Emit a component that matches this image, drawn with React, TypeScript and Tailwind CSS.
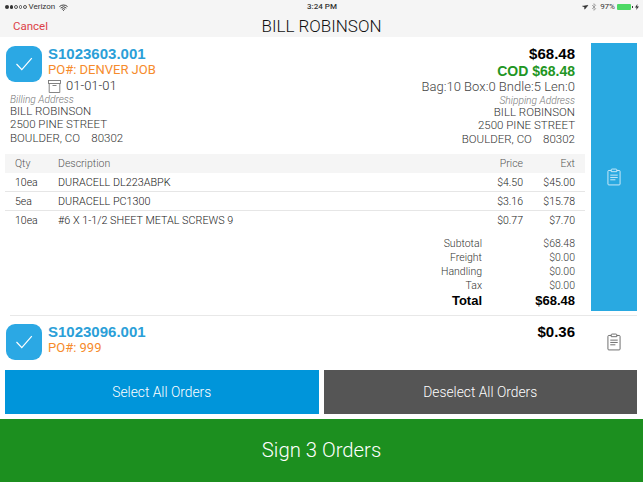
import { Bluetooth, Navigation, Wifi } from "lucide-react";

const items = [
  { qty: "10ea", desc: "DURACELL DL223ABPK", price: "$4.50", ext: "$45.00" },
  { qty: "5ea", desc: "DURACELL PC1300", price: "$3.16", ext: "$15.78" },
  { qty: "10ea", desc: "#6 X 1-1/2 SHEET METAL SCREWS 9", price: "$0.77", ext: "$7.70" },
];

const totals = [
  { label: "Subtotal", value: "$68.48" },
  { label: "Freight", value: "$0.00" },
  { label: "Handling", value: "$0.00" },
  { label: "Tax", value: "$0.00" },
];

function CheckTile() {
  return (
    <div className="flex h-9 w-9 shrink-0 items-center justify-center rounded-[9px] bg-[#2ba8e4]">
      <svg width="18" height="14" viewBox="0 0 18 14" fill="none" stroke="white" strokeWidth="1.2">
        <path d="M1.5 7 L6.8 12.6 L16.8 1.2" />
      </svg>
    </div>
  );
}

function Clipboard({ color }: { color: string }) {
  return (
    <svg width="14" height="18" viewBox="0 0 15 19" fill="none" stroke={color} strokeWidth="1">
      <path d="M4.5 2.5 H2 Q1 2.5 1 3.5 V17 Q1 18 2 18 H13 Q14 18 14 17 V3.5 Q14 2.5 13 2.5 H10.5" />
      <path d="M4.5 3.8 V1.8 Q4.5 1 5.5 1 H9.5 Q10.5 1 10.5 1.8 V3.8 Z" />
      <path d="M3.5 7.5 H11.5 M3.5 10 H11.5 M3.5 12.5 H9" />
    </svg>
  );
}

function BoxIcon() {
  return (
    <svg width="13" height="13" viewBox="0 0 13 13" fill="none" stroke="#777" strokeWidth="0.9">
      <rect x="0.5" y="0.5" width="12" height="3" />
      <path d="M1.2 3.5 V12.5 H11.8 V3.5" />
      <path d="M4.5 5.5 H8.5" />
    </svg>
  );
}

function Address({ title, right }: { title: string; right?: boolean }) {
  return (
    <div className={right ? "text-right" : "pl-[5px]"}>
      <div className="h-3 text-[10.2px] leading-3 font-light text-[#777] italic">{title}</div>
      <div className="text-[11.5px] leading-[13px] text-[#333]">
        <div className="-mt-px h-[13px]">BILL ROBINSON</div>
        <div className="h-[13px]">2500 PINE STREET</div>
        <div className="mt-px h-[13px] whitespace-pre">BOULDER, CO    80302</div>
      </div>
    </div>
  );
}

export default function App() {
  return (
    <div className="flex h-[482px] w-[643px] flex-col overflow-hidden bg-white font-['Roboto',sans-serif] font-light">
      <header className="h-[37px] shrink-0 bg-[#f5f5f5]">
        <div className="grid h-[14px] grid-cols-3 items-center pr-[4px] pl-[5px] text-[8px] font-normal text-[#333]">
          <div className="flex items-center gap-[2px]">
            <span className="flex gap-[1px]">
              <i className="h-[3.5px] w-[3.5px] rounded-full bg-[#333]" />
              <i className="h-[3.5px] w-[3.5px] rounded-full bg-[#333]" />
              <i className="h-[3.5px] w-[3.5px] rounded-full border-[0.5px] border-[#555]" />
              <i className="h-[3.5px] w-[3.5px] rounded-full border-[0.5px] border-[#555]" />
              <i className="h-[3.5px] w-[3.5px] rounded-full border-[0.5px] border-[#555]" />
            </span>
            <span>Verizon</span>
            <Wifi size={9} strokeWidth={2.5} className="ml-[2px]" />
          </div>
          <div className="text-center font-medium">3:24 PM</div>
          <div className="flex items-center justify-end gap-[1px]">
            <Navigation size={6} fill="#333" className="rotate-[15deg]" />
            <Bluetooth size={8} className="mx-[1px] text-[#888]" />
            <span>97%</span>
            <span className="ml-px h-[6px] w-[14px] rounded-[1px] bg-[#4cd964]" />
            <span className="h-[2px] w-px bg-[#333]" />
            <svg width="4" height="6" viewBox="0 0 4 6" fill="#333" className="ml-[1px]">
              <path d="M2.4 0 L0 3.4 H1.6 L1.2 6 L4 2.4 H2.2 Z" />
            </svg>
          </div>
        </div>
        <div className="grid h-[18px] grid-cols-[1fr_auto_1fr] items-center pl-[13px]">
          <button className="text-left text-[11.5px] font-normal text-[#dc3f47]">Cancel</button>
          <h1 className="pr-[13px] text-[17px] font-light text-[#111]">BILL ROBINSON</h1>
          <div />
        </div>
      </header>

      {/* open order */}
      <section className="h-[279px] shrink-0">
        <div className="flex h-[274px] pr-[6px] pl-[5px]">
          <div className="w-[580px] shrink-0">
            <div className="flex h-[117px] justify-between pt-[9px] pr-[10px]">
              <div>
                <div className="flex gap-[6px] pl-px">
                  <CheckTile />
                  <div>
                    <div className="h-4 font-['Liberation_Sans',sans-serif] text-[15px] leading-4 font-bold text-[#2b9fd8]">S1023603.001</div>
                    <div className="h-4 text-[13px] leading-4 font-normal text-[#f68b2c]">PO#: DENVER JOB</div>
                  </div>
                </div>
                <div className="-mt-[4px] flex h-4 items-center gap-[5px] pl-[43px] text-[13px] text-[#333]">
                  <BoxIcon />
                  01-01-01
                </div>
                <Address title="Billing Address" />
              </div>
              <div className="text-right">
                <div className="h-4 font-['Liberation_Sans',sans-serif] text-[15px] leading-4 font-bold text-black">$68.48</div>
                <div className="mt-px h-4 font-['Liberation_Sans',sans-serif] text-[14px] leading-4 font-bold text-[#1f9624]">COD $68.48</div>
                <div className="h-4 text-[13px] leading-4 tracking-[0.03px] text-[#444]">Bag:10 Box:0 Bndle:5 Len:0</div>
                <Address title="Shipping Address" right />
              </div>
            </div>

            <div className="grid h-[19px] grid-cols-[43px_1fr_60px_52px] items-center bg-[#f5f5f5] px-[10px] text-[10.5px] leading-[13px] text-[#555]">
              <span>Qty</span>
              <span>Description</span>
              <span className="text-right">Price</span>
              <span className="text-right">Ext</span>
            </div>
            {items.map((item, i) => (
              <div
                key={item.desc}
                className={`grid h-[19px] grid-cols-[43px_1fr_60px_52px] items-center px-[10px] text-[10.5px] leading-[13px] text-[#222] ${i < 2 ? "border-b border-[#e6e6e6]" : ""}`}
              >
                <span>{item.qty}</span>
                <span className="text-[10.8px]">{item.desc}</span>
                <span className="text-right">{item.price}</span>
                <span className="text-right">{item.ext}</span>
              </div>
            ))}

            <div className="mt-[7px] grid grid-cols-[1fr_93px] pr-[10px] text-right text-[10.5px] leading-[14px] text-[#333]">
              {totals.map((t) => (
                <div key={t.label} className="contents">
                  <span>{t.label}</span>
                  <span>{t.value}</span>
                </div>
              ))}
              <span className="font-['Liberation_Sans',sans-serif] text-[13px] leading-[16px] font-bold text-black">Total</span>
              <span className="font-['Liberation_Sans',sans-serif] text-[13px] leading-[16px] font-bold text-black">$68.48</span>
            </div>
          </div>
          <div className="mt-[6px] ml-[6px] flex flex-1 items-center justify-center bg-[#29a9e1]">
            <Clipboard color="#d5eefa" />
          </div>
        </div>
        <div className="mt-[4px] mr-[6px] ml-[10px] h-px bg-[#e8e8e8]" />
      </section>

      {/* collapsed order */}
      <section className="flex h-[54px] shrink-0 pt-[8px] pr-[6px] pl-[6px]">
        <CheckTile />
        <div className="ml-[6px]">
          <div className="h-4 font-['Liberation_Sans',sans-serif] text-[15px] leading-4 font-bold text-[#2b9fd8]">S1023096.001</div>
          <div className="h-4 text-[13px] leading-4 font-normal text-[#f68b2c]">PO#: 999</div>
        </div>
        <div className="ml-auto h-4 font-['Liberation_Sans',sans-serif] text-[15px] leading-4 font-bold text-black">$0.36</div>
        <div className="ml-[16px] flex w-[46px] items-start justify-center pt-[9px]">
          <Clipboard color="#666" />
        </div>
      </section>

      <div className="grid h-[44px] shrink-0 grid-cols-2 gap-[5px] pr-[6px] pl-[5px]">
        <button className="bg-[#0095da] text-[13.8px] text-white">Select All Orders</button>
        <button className="bg-[#555555] text-[13.8px] text-white">Deselect All Orders</button>
      </div>

      <button className="mt-[5px] flex-1 bg-[#1c8f1f] text-[20.3px] text-white">Sign 3 Orders</button>
    </div>
  );
}
